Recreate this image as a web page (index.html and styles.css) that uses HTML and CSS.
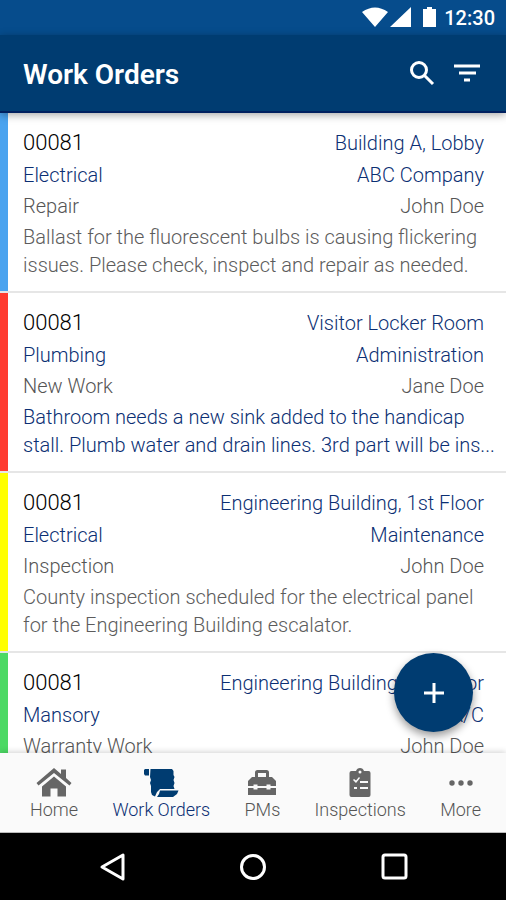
FILE: index.html
```html
<!DOCTYPE html>
<html lang="en">
<head>
<meta charset="utf-8">
<meta name="viewport" content="width=device-width, initial-scale=1">
<title>Work Orders</title>
<link rel="stylesheet" href="styles.css">
</head>
<body>
<div class="status">
  <svg class="status-icons" width="76" height="22" viewBox="0 0 76 22" aria-hidden="true"><path d="M0 5Q13-4 26 5L13 20ZM28 20 49 0V20ZM61 2h4V0h5v2h4v18H61Z"/></svg>
  <span>12:30</span>
</div>
<header class="bar">
  <h1>Work Orders</h1>
  <div class="bar-actions">
    <button type="button" aria-label="Search"><svg width="26" height="26" viewBox="0 0 26 26"><circle cx="10" cy="9" r="7.500"/><path d="m15 14 9 9"/></svg></button>
    <button type="button" aria-label="Filter"><svg width="26" height="26" viewBox="0 0 26 26"><path d="M0 5h26M5 12h17M10 19h6"/></svg></button>
  </div>
</header>
<main class="list">
  <article class="order blue">
    <div class="row"><h2>00081</h2><span>Building A, Lobby</span></div>
    <div class="row"><span>Electrical</span><span>ABC Company</span></div>
    <div class="row muted"><span>Repair</span><span>John Doe</span></div>
    <p>Ballast for the fluorescent bulbs is causing flickering issues. Please check, inspect and repair as needed.</p>
  </article>
  <article class="order red">
    <div class="row"><h2>00081</h2><span>Visitor Locker Room</span></div>
    <div class="row"><span>Plumbing</span><span>Administration</span></div>
    <div class="row muted"><span>New Work</span><span>Jane Doe</span></div>
    <p class="unread">Bathroom needs a new sink added to the handicap stall. Plumb water and drain lines. 3rd part will be ins...</p>
  </article>
  <article class="order yellow">
    <div class="row"><h2>00081</h2><span>Engineering Building, 1st Floor</span></div>
    <div class="row"><span>Electrical</span><span>Maintenance</span></div>
    <div class="row muted"><span>Inspection</span><span>John Doe</span></div>
    <p>County inspection scheduled for the electrical panel for the Engineering Building escalator.</p>
  </article>
  <article class="order green">
    <div class="row"><h2>00081</h2><span>Engineering Building, 1st Floor</span></div>
    <div class="row"><span>Mansory</span><span>A/C</span></div>
    <div class="row muted"><span>Warranty Work</span><span>John Doe</span></div>
  </article>
</main>
<div class="dock">
  <button class="add" type="button" aria-label="Add work order"><svg width="20" height="20" viewBox="0 0 20 20"><path d="M10 0v20M0 10h20"/></svg></button>
  <nav class="tabs">
    <a href="#home"><svg width="36" height="30" viewBox="0 0 36 30"><path d="M18 8.500 30 18.500V28.500H21.500V20.500H14.500V28.500H6V18.500Z"/><path d="M18 0 25 6V1.500H30V10L35.500 15 33.500 17.500 18 5 2.500 17.500.500 15Z"/></svg>Home</a>
    <a class="active" href="#orders"><svg width="36" height="30" viewBox="0 0 36 30"><path d="M2 1H6V7.500H2L1 6V2Z"/><path d="M7.500 1H29L30.500 3V7L31.500 9 30.500 12 31.500 15 30.500 18 31.500 21H17L14 24 12 28.500 9 27 8 24V18L7 15 8 12 7 9Z"/><path d="M17 22.500H35.500L34 26 30 29H14L16 26Z"/></svg>Work Orders</a>
    <a href="#pms"><svg width="30" height="30" viewBox="0 0 30 30"><path fill-rule="evenodd" d="M8 9V4.500Q8 2 10.500 2H19.500Q22 2 22 4.500V9H25L29 13V18H23.500V16.500H19.500V18H10.500V16.500H6.500V18H1V13L5 9ZM11 9H19V5H11ZM1 20H6.500V21.500H10.500V20H19.500V21.500H23.500V20H29V27H1Z"/></svg>PMs</a>
    <a href="#inspections"><svg width="24" height="30" viewBox="0 0 24 30"><path fill-rule="evenodd" d="M4 3H8Q9 0 12 0T16 3H20.500Q22.500 3 22.500 5V27Q22.500 29 20.500 29H3.500Q1.500 29 1.500 27V5Q1.500 3 3.500 3ZM12 2.500A1.500 1.500 0 1 0 12 5.500A1.500 1.500 0 1 0 12 2.500M5 12 8 15 12 10 11 9 8 12.500 6 11ZM12 13V15H20V13ZM6 19V21H9V19ZM12 19V21H20V19Z"/></svg>Inspections</a>
    <a href="#more"><svg width="24" height="30" viewBox="0 0 24 30"><circle cx="3" cy="15" r="2.700"/><circle cx="12" cy="15" r="2.700"/><circle cx="21" cy="15" r="2.700"/></svg>More</a>
  </nav>
</div>
<div class="system">
  <button type="button" aria-label="Back"><svg width="28" height="30" viewBox="0 0 28 30"><path d="M25 3V27L4 15Z"/></svg></button>
  <button type="button" aria-label="Home"><svg width="28" height="30" viewBox="0 0 28 30"><circle cx="14" cy="15" r="11.500"/></svg></button>
  <button type="button" aria-label="Recent apps"><svg width="28" height="30" viewBox="0 0 28 30"><rect x="3" y="3" width="23" height="23" rx="2"/></svg></button>
</div>
</body>
</html>
```
FILE: styles.css
```css
* { box-sizing: border-box; }
body {
  margin: 0;
  height: 100vh;
  display: flex;
  flex-direction: column;
  font-family: Roboto, "Liberation Sans", sans-serif;
  font-size: 20px;
  font-weight: 300;
  color: #0b2f73;
  background: #fff;
}
h1, h2, p { margin: 0; }
button { border: 0; padding: 0; background: none; display: flex; cursor: pointer; }
svg { display: block; }

.status {
  flex: none;
  height: 35px;
  padding: 0 11px;
  display: flex;
  align-items: center;
  justify-content: flex-end;
  gap: 6px;
  background: #064c8c;
  color: #fff;
  font-weight: 500;
}
.status-icons { fill: #fff; }

.bar {
  flex: none;
  height: 78px;
  padding: 2px 26px 0 23px;
  display: flex;
  align-items: center;
  justify-content: space-between;
  position: relative;
  z-index: 1;
  background: #003c71;
  border-bottom: 2px solid #00205f;
  color: #fff;
  box-shadow: 0 2px 8px rgba(0, 0, 0, .35);
}
.bar h1 { font-size: 28px; font-weight: 600; }
.bar-actions { display: flex; gap: 19px; }
.bar svg { fill: none; stroke: #fff; stroke-width: 3; }

.list { flex: 1; min-height: 0; overflow: hidden; }
.order {
  height: 180px;
  padding: 14px 22px 0 15px;
  border-left: 8px solid;
  position: relative;
}
.order::after {
  content: "";
  position: absolute;
  left: -8px;
  right: 0;
  bottom: 0;
  height: 2px;
  background: #e6e6e6;
}
.blue { border-color: #4aa3ef; }
.red { border-color: #ff3b30; }
.yellow { border-color: #ffff00; }
.green { border-color: #4cd964; }
.row { display: flex; justify-content: space-between; line-height: 32px; }
.row h2 { font-size: 22px; font-weight: 300; color: #000; }
.muted { line-height: 31px; color: #555; }
.order p { margin-right: -16px; padding-top: 1px; line-height: 28px; color: #5c5c5c; }
.order .unread { color: #0b2f73; }

.dock { flex: none; position: relative; }
.add {
  position: absolute;
  right: 33px;
  bottom: 101px;
  width: 79px;
  height: 79px;
  border-radius: 50%;
  align-items: center;
  justify-content: center;
  background: #003c71;
  box-shadow: 0 4px 8px rgba(0, 0, 0, .4);
}
.add svg { stroke: #fff; stroke-width: 3; }
.tabs {
  height: 80px;
  padding: 15px 25px 0 30px;
  display: flex;
  justify-content: space-between;
  position: relative;
  background: #fafafa;
  border-bottom: 1px solid #bbb;
  box-shadow: 0 -1px 6px rgba(0, 0, 0, .18);
}
.tabs a {
  display: flex;
  flex-direction: column;
  align-items: center;
  gap: 2px;
  color: #555;
  font-size: 18px;
  line-height: 20px;
  text-decoration: none;
}
.tabs svg { fill: #666; }
.tabs .active { color: #0b2f73; }
.tabs .active svg { fill: #003c71; }

.system {
  flex: none;
  height: 67px;
  display: flex;
  align-items: center;
  justify-content: center;
  gap: 113px;
  background: #000;
}
.system svg { fill: none; stroke: #fff; stroke-width: 3; stroke-linejoin: round; }
```
